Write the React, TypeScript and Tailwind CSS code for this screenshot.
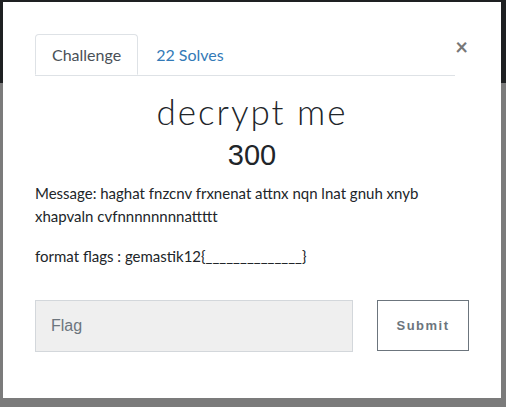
export default function App() {
    return (
        <div className="relative w-[506px] h-[407px] overflow-hidden bg-[#7b7b7b]" style={{ fontFamily: 'Lato, "Liberation Sans", sans-serif' }}>
            {/* page behind the backdrop */}
            <div className="h-[83px] bg-[#1e2022] flex gap-10 px-24 pt-1 text-[#3c3f42] text-xs">
                <span>Notifications</span>
                <span>Users</span>
                <span>Scoreboard</span>
                <span>Challenges</span>
            </div>

            <div className="absolute left-[3px] top-[2px] w-[498px] h-[396px] bg-white px-8 pt-8">
                <div className="flex items-start">
                    <div className="flex w-[420px] border-b border-[#dee2e6] text-[16px]">
                        <div className="h-[41px] px-4 flex items-center text-[#495057] border border-[#dee2e6] border-b-white rounded-t -mb-px bg-white">
                            Challenge
                        </div>
                        <div className="h-[41px] px-[18px] flex items-center text-[#337ab7]">22 Solves</div>
                    </div>
                    <button className="ml-auto mt-[2px] mr-[1px] text-[#777] text-[22px] font-bold leading-none">×</button>
                </div>

                <div className="text-center text-[#212529]">
                    <h2 className="mt-[13px] text-[35px] font-light tracking-[2px] leading-[44px]">decrypt me</h2>
                    <div className="text-[29px] leading-[36px] mt-[4px]" style={{ fontFamily: '"Liberation Sans", sans-serif' }}>300</div>
                </div>

                <div className="mt-[9px] text-[15px] leading-[23px] text-[#212529]">
                    <p>Message: haghat fnzcnv frxnenat attnx nqn lnat gnuh xnyb xhapvaln cvfnnnnnnnnattttt</p>
                    <p className="mt-[17px]">format flags : gemastik12{'{'}______________{'}'}</p>
                </div>

                <div className="mt-[32px] flex items-start justify-between">
                    <input
                        placeholder="Flag"
                        className="w-[318px] h-[52px] bg-[#efefef] border border-[#d3d7db] px-[15px] text-[16px] placeholder:text-[#6c757d] outline-none"
                        style={{ fontFamily: '"Liberation Sans", sans-serif' }}
                    />
                    <button
                        className="w-[92px] h-[51px] border border-[#6c757d] text-[#6c757d] text-[13px] font-bold tracking-[1.5px]"
                        style={{ fontFamily: '"Liberation Sans", sans-serif' }}
                    >
                        Submit
                    </button>
                </div>
            </div>
        </div>
    );
}
